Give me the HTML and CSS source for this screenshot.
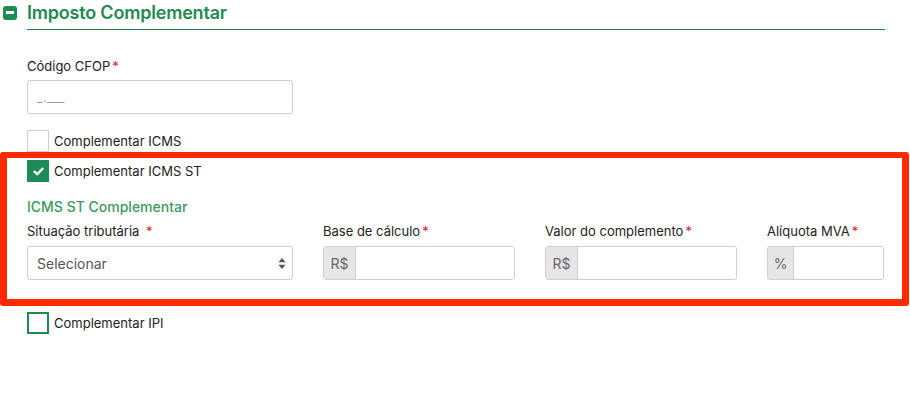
FILE: index.html
```html
<!DOCTYPE html>
<html lang="pt-BR">
<head>
<meta charset="utf-8">
<title>Imposto Complementar</title>
<link rel="stylesheet" href="styles.css">
</head>
<body>
<div class="page">
  <div class="header">
    <span class="collapse-icon"><span class="bar"></span></span>
    <h2 class="title">Imposto Complementar</h2>
  </div>
  <div class="content">
    <div class="rule"></div>

    <label class="label lbl-cfop">Código CFOP<span class="req">*</span></label>
    <div class="input input-cfop"><span class="placeholder">_.___</span></div>

    <div class="check-row row-icms">
      <span class="box"></span>
      <span class="check-text">Complementar ICMS</span>
    </div>
  </div>

  <div class="highlight">
    <div class="check-row">
      <span class="box checked">
        <svg width="11" height="9" viewBox="0 0 12 10"><path d="M1.5 5.2 L4.6 8 L10.5 1.8" fill="none" stroke="#fff" stroke-width="2.6" stroke-linecap="round" stroke-linejoin="round"/></svg>
      </span>
      <span class="check-text">Complementar ICMS ST</span>
    </div>

    <h3 class="subtitle">ICMS ST Complementar</h3>

    <div class="grid">
      <div class="field">
        <label class="label">Situação tributária <span class="req sp">*</span></label>
        <div class="input select">
          <span class="sel-text">Selecionar</span>
          <svg class="arrows" width="8" height="13" viewBox="0 0 8 13"><path d="M4 1 L7.5 5.2 H0.5 Z M4 12 L7.5 7.8 H0.5 Z" fill="#555"/></svg>
        </div>
      </div>
      <div class="field">
        <label class="label">Base de cálculo<span class="req">*</span></label>
        <div class="group"><span class="addon">R$</span><span class="group-input"></span></div>
      </div>
      <div class="field">
        <label class="label">Valor do complemento<span class="req">*</span></label>
        <div class="group"><span class="addon">R$</span><span class="group-input"></span></div>
      </div>
      <div class="field">
        <label class="label">Alíquota MVA<span class="req">*</span></label>
        <div class="group"><span class="addon pct">%</span><span class="group-input"></span></div>
      </div>
    </div>
  </div>

  <div class="content">
    <div class="check-row row-ipi">
      <span class="box green"></span>
      <span class="check-text">Complementar IPI</span>
    </div>
  </div>
</div>
</body>
</html>
```
FILE: styles.css
```css
* { box-sizing: border-box; }
html, body { margin: 0; padding: 0; background: #fff; }
body {
  font-family: Inter, "Noto Sans", "Liberation Sans", sans-serif;
  color: #222;
  width: 910px;
  height: 397px;
  overflow: hidden;
}
.page { width: 910px; }

.header {
  display: flex;
  align-items: center;
  height: 29px;
  padding-left: 3px;
  gap: 10px;
}
.collapse-icon {
  width: 14px;
  height: 14px;
  border-radius: 3px;
  background: #1f8a52;
  display: flex;
  align-items: center;
  justify-content: center;
  margin-top: -4px;
}
.collapse-icon .bar {
  width: 8px;
  height: 3px;
  background: #fff;
}
.title {
  margin: 0;
  margin-top: -5px;
  font-size: 18px;
  font-weight: 600;
  color: #23894f;
  letter-spacing: -0.2px;
}

.content { padding-left: 27px; }
.rule {
  width: 858px;
  height: 1px;
  background: #2b7f55;
}

.label {
  display: block;
  font-size: 13px;
  line-height: 16px;
  color: #222;
}
.req { color: #e0201b; margin-left: 2px; }
.req.sp { margin-left: 3px; }
.lbl-cfop { margin-top: 28px; }

.input {
  height: 34px;
  border: 1px solid #cfcfcf;
  border-radius: 3px;
  background: #fff;
  display: flex;
  align-items: center;
}
.input-cfop {
  width: 266px;
  margin-top: 6px;
  padding-left: 9px;
}
.placeholder {
  font-size: 12px;
  color: #999;
  letter-spacing: 0.5px;
}

.check-row {
  display: flex;
  align-items: center;
  gap: 5px;
  height: 22px;
}
.row-icms { margin-top: 16px; }
.box {
  width: 22px;
  height: 22px;
  border: 1px solid #cfcfcf;
  background: #fff;
  display: flex;
  align-items: center;
  justify-content: center;
  flex: none;
}
.box.checked { background: #1e8a55; border-color: #1e8a55; }
.box.green { border: 2px solid #1e8a55; }
.check-text { font-size: 13px; color: #222; margin-top: -1px; }

.highlight {
  width: 909px;
  border-style: solid;
  border-color: #ff2a00;
  border-width: 6px 7px 7px 7px;
  border-radius: 3px;
  padding: 2px 0 19px 20px;
}

.subtitle {
  margin: 16px 0 0;
  font-size: 14px;
  line-height: 17px;
  font-weight: 500;
  color: #3c9a5e;
}

.grid {
  display: grid;
  grid-template-columns: 266px 192px 192px 117px;
  column-gap: 30px;
  margin-top: 8px;
}
.field .label { margin-bottom: 7px; }

.select {
  justify-content: space-between;
  padding: 0 6px 0 9px;
}
.sel-text { font-size: 14px; color: #555; }

.group {
  display: flex;
  height: 34px;
  border: 1px solid #cfcfcf;
  border-radius: 3px;
  overflow: hidden;
}
.addon {
  width: 32px;
  flex: none;
  background: #e6e6e6;
  border-right: 1px solid #cfcfcf;
  display: flex;
  align-items: center;
  justify-content: center;
  font-size: 14px;
  color: #666;
}
.addon.pct { width: 26px; }
.group-input { flex: 1; background: #fff; }

.row-ipi { margin-top: 6px; }
```
